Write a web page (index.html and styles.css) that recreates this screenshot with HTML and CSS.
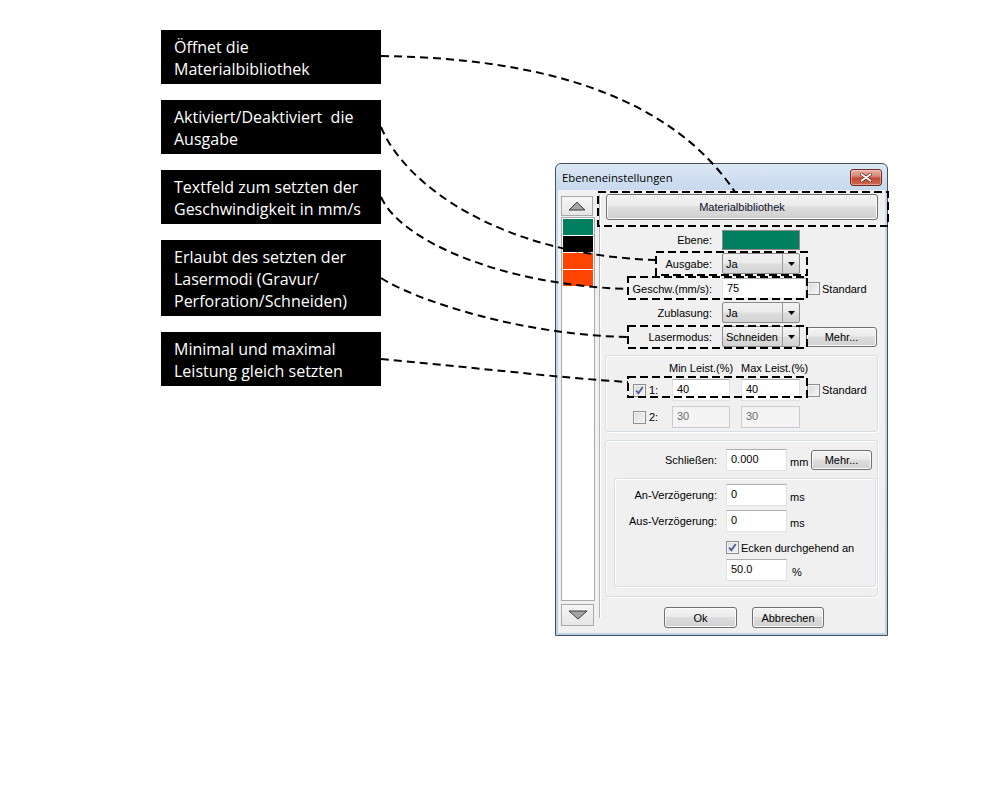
FILE: index.html
```html
<!DOCTYPE html>
<html lang="de">
<head>
<meta charset="utf-8">
<title>Ebeneneinstellungen</title>
<link rel="stylesheet" href="styles.css">
</head>
<body>
<div class="canvas">
  <div class="notes">
    <div class="note">Öffnet die<br>Materialbibliothek</div>
    <div class="note">Aktiviert/Deaktiviert&nbsp; die<br>Ausgabe</div>
    <div class="note">Textfeld zum setzten der<br>Geschwindigkeit in mm/s</div>
    <div class="note">Erlaubt des setzten der<br>Lasermodi (Gravur/<br>Perforation/Schneiden)</div>
    <div class="note">Minimal und maximal<br>Leistung gleich setzten</div>
  </div>

  <div class="window">
    <div class="titlebar">
      <span class="title">Ebeneneinstellungen</span>
      <span class="close-btn">
        <svg width="12" height="9" viewBox="0 0 12 9"><path d="M1.5 1.2 L10.5 7.8 M10.5 1.2 L1.5 7.8" stroke="#6b2a20" stroke-width="3.4" stroke-linecap="round"/><path d="M1.5 1.2 L10.5 7.8 M10.5 1.2 L1.5 7.8" stroke="#fff" stroke-width="1.8" stroke-linecap="round"/></svg>
      </span>
    </div>
    <div class="client">
      <div class="palette">
        <div class="scroll-btn up">
          <svg width="18" height="10" viewBox="0 0 18 10"><path d="M1 9 L9 1.2 L17 9 Z" fill="#a4a4a4" stroke="#3c3c3c" stroke-width="1" stroke-linejoin="round"/></svg>
        </div>
        <div class="layer-list">
          <div class="swatch sw-green"></div>
          <div class="swatch sw-black"></div>
          <div class="swatch sw-orange"></div>
          <div class="swatch sw-orange"></div>
        </div>
        <div class="scroll-btn down">
          <svg width="20" height="10" viewBox="0 0 20 10"><path d="M1 1 L19 1 L10 9 Z" fill="#a4a4a4" stroke="#3c3c3c" stroke-width="1" stroke-linejoin="round"/></svg>
        </div>
      </div>
      <div class="splitter"></div>
      <div class="form">
        <div class="btn btn-material">Materialbibliothek</div>

        <div class="row row-ebene"><span class="lbl">Ebene:</span><span class="color-field"></span></div>
        <div class="row"><span class="lbl">Ausgabe:</span><span class="combo"><span class="combo-text">Ja</span><span class="combo-arrow"><svg width="7" height="4" viewBox="0 0 7 4"><path d="M0 0 H7 L3.5 4 Z" fill="#000"/></svg></span></span></div>
        <div class="row row-gap4"><span class="lbl">Geschw.(mm/s):</span><span class="field field-speed">75</span><span class="check"></span><span class="check-label">Standard</span></div>
        <div class="row"><span class="lbl">Zublasung:</span><span class="combo"><span class="combo-text">Ja</span><span class="combo-arrow"><svg width="7" height="4" viewBox="0 0 7 4"><path d="M0 0 H7 L3.5 4 Z" fill="#000"/></svg></span></span></div>
        <div class="row"><span class="lbl">Lasermodus:</span><span class="combo"><span class="combo-text">Schneiden</span><span class="combo-arrow"><svg width="7" height="4" viewBox="0 0 7 4"><path d="M0 0 H7 L3.5 4 Z" fill="#000"/></svg></span></span><span class="btn btn-mehr">Mehr...</span></div>

        <div class="group group-power">
          <div class="power-head"><span class="ph-min">Min Leist.(%)</span><span>Max Leist.(%)</span></div>
          <div class="power-row">
            <span class="check checked"><svg width="11" height="11" viewBox="0 0 11 11"><path d="M2.2 5.6 L4.4 8.3 L8.8 2" fill="none" stroke="#4a5f93" stroke-width="1.8"/></svg></span>
            <span class="num">1:</span>
            <span class="field field-pow">40</span>
            <span class="field field-pow2">40</span>
            <span class="check check-std"></span><span class="check-label">Standard</span>
          </div>
          <div class="power-row row2">
            <span class="check"></span>
            <span class="num">2:</span>
            <span class="field field-pow disabled">30</span>
            <span class="field field-pow2 disabled">30</span>
          </div>
        </div>

        <div class="group group-close">
          <div class="close-row">
            <span class="lbl2">Schließen:</span><span class="field field-small">0.000</span><span class="unit unit-mm">mm</span><span class="btn btn-mehr2">Mehr...</span>
          </div>
          <div class="group group-delay">
            <div class="delay-row"><span class="lbl3">An-Verzögerung:</span><span class="field field-small">0</span><span class="unit">ms</span></div>
            <div class="delay-row"><span class="lbl3">Aus-Verzögerung:</span><span class="field field-small">0</span><span class="unit">ms</span></div>
            <div class="corner-row"><span class="check checked"><svg width="11" height="11" viewBox="0 0 11 11"><path d="M2.2 5.6 L4.4 8.3 L8.8 2" fill="none" stroke="#4a5f93" stroke-width="1.8"/></svg></span><span class="check-label">Ecken durchgehend an</span></div>
            <div class="delay-row pct-row"><span class="field field-small">50.0</span><span class="unit unit-pct">%</span></div>
          </div>
        </div>

        <div class="actions">
          <span class="btn btn-ok">Ok</span>
          <span class="btn btn-cancel">Abbrechen</span>
        </div>
      </div>
    </div>
  </div>

  <svg class="annotations" width="1000" height="800" viewBox="0 0 1000 800">
    <g fill="none" stroke="#000" stroke-width="2" stroke-dasharray="8 5">
      <path d="M381 56 C540 58 670 95 735 192"/>
      <path d="M381 127 C405 185 500 255 656 260"/>
      <path d="M381 197 C400 240 500 285 628 289"/>
      <path d="M381 278 C415 300 520 335 628 337"/>
      <path d="M381 359 C460 366 560 378 628 382"/>
    </g>
    <g fill="none" stroke="#000" stroke-width="2" stroke-dasharray="8 4">
      <rect x="598" y="192" width="290" height="34"/>
      <rect x="656" y="252" width="151" height="23"/>
      <rect x="628" y="277" width="179" height="22"/>
      <rect x="628" y="326" width="179" height="22"/>
      <rect x="628" y="377" width="179" height="20"/>
    </g>
  </svg>
</div>
</body>
</html>
```

FILE: styles.css
```css
html, body {
  margin: 0;
  background: #fff;
}

.canvas {
  position: relative;
  width: 1000px;
  height: 800px;
  box-sizing: border-box;
  padding: 30px 0 0 161px;
  display: flex;
  align-items: flex-start;
}

/* ---------- annotation notes ---------- */
.notes {
  display: flex;
  flex-direction: column;
  gap: 16px;
  width: 220px;
  flex: none;
}

.note {
  background: #000;
  color: #fff;
  font-family: "Open Sans", sans-serif;
  font-size: 16px;
  line-height: 22px;
  padding: 6px 0 4px 13px;
  white-space: nowrap;
}

.annotations {
  position: absolute;
  left: 0;
  top: 0;
  pointer-events: none;
}

/* ---------- window ---------- */
.window {
  margin: 133px 0 0 174px;
  width: 333px;
  height: 473px;
  box-sizing: border-box;
  border: 1px solid #44505e;
  border-radius: 6px 6px 0 0;
  background: linear-gradient(#dce7f4, #c6d9ee 26px, #bcd1e8);
  padding: 0 2px 2px 2px;
  display: flex;
  flex-direction: column;
  flex: none;
  font-family: "Liberation Sans", Arial, sans-serif;
  font-size: 11px;
  color: #000;
}

.titlebar {
  height: 26px;
  flex: none;
  display: flex;
  align-items: center;
  justify-content: space-between;
  padding: 0 3px 0 4px;
}

.title {
  font-family: "Open Sans", sans-serif;
  font-size: 11.3px;
  color: #000;
  padding-top: 1px;
}

.close-btn {
  width: 30px;
  height: 15px;
  border: 1px solid #6e2a20;
  border-radius: 3px;
  background: linear-gradient(#eab0a3, #d88a79 40%, #c24a33 55%, #cf6a52);
  box-shadow: inset 0 0 0 1px rgba(255, 255, 255, 0.35);
  display: flex;
  align-items: center;
  justify-content: center;
  margin-top: 1px;
}

.client {
  flex: 1;
  background: #f0f0f0;
  display: flex;
  padding: 4px 7px 0 3px;
  min-height: 0;
}

/* ---------- palette ---------- */
.palette {
  width: 34px;
  flex: none;
  display: flex;
  flex-direction: column;
  margin: 2px 0 7px 0;
}

.scroll-btn {
  box-sizing: border-box;
  border: 1px solid #a9a9a9;
  background: linear-gradient(#f6f6f6, #e6e6e6);
  display: flex;
  align-items: center;
  justify-content: center;
  flex: none;
}

.scroll-btn.up {
  height: 20px;
  width: 32px;
}

.scroll-btn.down {
  height: 22px;
  width: 33px;
  margin-top: 3px;
}

.layer-list {
  flex: 1;
  margin-top: 1px;
  background: #fff;
  border: 1px solid #a8abb2;
  padding: 1px;
  display: flex;
  flex-direction: column;
  gap: 1px;
}

.swatch {
  height: 16px;
  flex: none;
}

.sw-green { background: #008060; }
.sw-black { background: #000; }
.sw-orange { background: #ff4400; }

.splitter {
  width: 1px;
  flex: none;
  margin: 1px 5px 15px 4px;
  background: #b4b4b4;
  box-shadow: 1px 0 0 #fff;
}

/* ---------- form ---------- */
.form {
  width: 273px;
  flex: none;
  display: flex;
  flex-direction: column;
}

.btn {
  box-sizing: border-box;
  border: 1px solid #707070;
  border-radius: 3px;
  background: linear-gradient(#f3f3f3, #ebebeb 45%, #dddddd 50%, #d0d0d0);
  box-shadow: inset 0 0 0 1px #fbfbfb;
  display: flex;
  align-items: center;
  justify-content: center;
  color: #000;
  white-space: nowrap;
}

.btn-material {
  margin-left: 1px;
  width: 272px;
  height: 26px;
  color: #101030;
}

.row {
  display: flex;
  align-items: center;
  height: 21px;
  margin-top: 3px;
}

.row-ebene {
  margin-top: 10px;
  height: 20px;
}

.row-gap4 { margin-top: 4px; }

.lbl {
  width: 107px;
  margin-right: 10px;
  text-align: right;
  flex: none;
}

.color-field {
  width: 78px;
  height: 20px;
  box-sizing: border-box;
  border: 1px solid #8a8a8a;
  background: #008060;
}

.combo {
  box-sizing: border-box;
  width: 78px;
  height: 21px;
  border: 1px solid #8a8a8a;
  border-radius: 2px;
  background: linear-gradient(#f2f2f2, #ebebeb 45%, #dddddd 55%, #d3d3d3);
  display: flex;
  flex: none;
}

.combo-text {
  flex: 1;
  padding-left: 3px;
  display: flex;
  align-items: center;
  padding-top: 1px;
}

.combo-arrow {
  width: 16px;
  border-left: 1px solid #9a9a9a;
  display: flex;
  align-items: center;
  justify-content: center;
}

.field {
  box-sizing: border-box;
  height: 22px;
  background: #fff;
  border: 1px solid #dfe1e6;
  border-top-color: #abadb3;
  border-left-color: #e2e3ea;
  padding: 3px 0 0 4px;
  flex: none;
}

.field-speed {
  width: 84px;
  height: 21px;
}

.field.disabled {
  background: #f4f4f4;
  border-color: #c9cbd0;
  color: #6d6d6d;
}

.check {
  box-sizing: border-box;
  width: 13px;
  height: 13px;
  border: 1px solid #8f8f8f;
  background: linear-gradient(135deg, #d9d9d9, #f7f7f7);
  box-shadow: inset 0 0 0 1px #f4f4f4;
  flex: none;
  display: flex;
  align-items: center;
  justify-content: center;
}

.row .check {
  margin-left: 1px;
}

.check-label {
  margin-left: 2px;
  white-space: nowrap;
}

.btn-mehr {
  width: 71px;
  height: 20px;
  margin-left: 6px;
}

/* ---------- group boxes ---------- */
.group {
  box-sizing: border-box;
  border: 1px solid #d5dfe5;
  border-radius: 3px;
  box-shadow: inset 1px 1px 0 #fff, 1px 1px 0 #fff;
}

.group-power {
  margin-top: 8px;
  height: 77px;
  padding: 4px 0 0 27px;
}

.power-head {
  height: 16px;
  display: flex;
  align-items: center;
  padding-left: 36px;
}

.ph-min {
  width: 72px;
}

.power-row {
  display: flex;
  align-items: center;
  height: 22px;
  margin-top: 3px;
}

.power-row.row2 {
  margin-top: 5px;
}

.num {
  width: 26px;
  padding-left: 3px;
  box-sizing: border-box;
  flex: none;
}

.field-pow {
  width: 58px;
}

.field-pow2 {
  width: 59px;
  margin-left: 11px;
}

.check-std {
  margin-left: 7px;
}

.group-close {
  margin-top: 8px;
  height: 157px;
  padding: 8px 1px 0 8px;
}

.close-row {
  display: flex;
  align-items: center;
  height: 22px;
  margin-left: -8px;
}

.lbl2 {
  width: 111px;
  margin-right: 9px;
  text-align: right;
  flex: none;
}

.field-small {
  width: 61px;
}

.unit {
  margin-left: 3px;
  padding-top: 4px;
}

.unit-mm {
  width: 18px;
}

.btn-mehr2 {
  width: 61px;
  height: 20px;
  margin-left: 3px;
}

.group-delay {
  margin-top: 7px;
  height: 109px;
  padding: 5px 0 0 0;
}

.delay-row {
  display: flex;
  align-items: center;
  height: 22px;
}

.delay-row + .delay-row {
  margin-top: 4px;
}

.lbl3 {
  width: 102px;
  margin-right: 9px;
  text-align: right;
  flex: none;
}

.corner-row {
  display: flex;
  align-items: center;
  height: 13px;
  margin-top: 9px;
  padding-left: 111px;
}

.pct-row {
  margin-top: 5px;
  padding-left: 111px;
}

.unit-pct {
  margin-left: 5px;
}

.actions {
  display: flex;
  gap: 15px;
  margin-top: 10px;
  padding-left: 59px;
}

.btn-ok {
  width: 73px;
  height: 21px;
}

.btn-cancel {
  width: 72px;
  height: 21px;
}
```
